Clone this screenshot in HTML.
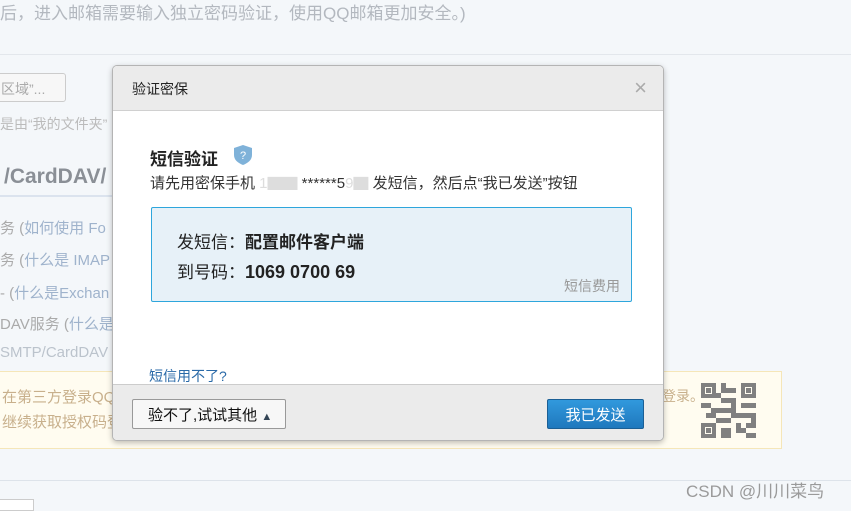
<!DOCTYPE html>
<html><head><meta charset="utf-8"><style>
*{margin:0;padding:0;box-sizing:border-box}
body{width:851px;height:507px;overflow:hidden;background:#f4f7fa;font-family:"Liberation Sans","Noto Sans CJK SC",sans-serif;position:relative;color:#999}
.a{position:absolute;white-space:nowrap}
.dlg{position:absolute;left:112px;top:65px;width:552px;height:376px;background:#fff;border:1px solid #b4b4b4;border-radius:5px;box-shadow:0 2px 6px rgba(0,0,0,.25);overflow:hidden}
.hd{height:45px;background:#ebebeb;border-bottom:1px solid #d0d0d0;font-size:14px;color:#222;padding:13px 0 0 19px}
.ft{position:absolute;left:0;right:0;bottom:0;height:56px;background:#ebebeb;border-top:1px solid #ccc}
</style></head><body>
<div class="a" style="left:0;top:-1px;font-size:17px;color:#b3b8bf">后，进入邮箱需要输入独立密码验证，使用QQ邮箱更加安全。)</div>
<div class="a" style="left:0;top:54px;width:851px;height:1px;background:#e3e7ec"></div>
<div class="a" style="left:-4px;top:73px;width:70px;height:29px;border:1px solid #ccc;border-radius:3px;background:#f7f7f7;font-size:14px;color:#aaa;padding:5px 0 0 4px">区域”...</div>
<div class="a" style="left:0;top:114px;font-size:14px;color:#bbb">是由“我的文件夹”</div>
<div class="a" style="left:4px;top:165px;font-size:21px;font-weight:bold;color:#8a8f96">/CardDAV/</div>
<div class="a" style="left:0;top:195px;width:112px;height:2px;background:#dbe3ee"></div>
<div class="a" style="left:0;top:217px;font-size:15px;color:#aaa">务 (<span style="color:#9fb3cc">如何使用 Fo</span></div>
<div class="a" style="left:0;top:249px;font-size:15px;color:#aaa">务 (<span style="color:#9fb3cc">什么是 IMAP</span></div>
<div class="a" style="left:0;top:282px;font-size:15px;color:#aaa">- (<span style="color:#9fb3cc">什么是Exchan</span></div>
<div class="a" style="left:0;top:313px;font-size:15px;color:#aaa">DAV服务 (<span style="color:#9fb3cc">什么是</span></div>
<div class="a" style="left:0;top:344px;font-size:15px;color:#bbc3cc">SMTP/CardDAV</div>
<div class="a" style="left:-2px;top:371px;width:784px;height:78px;background:#fffcf0;border:1px solid #f5e6b8"></div>
<div class="a" style="left:2px;top:386px;font-size:15px;color:#c8b08c">在第三方登录QQ</div>
<div class="a" style="left:2px;top:411px;font-size:15px;color:#c8b08c">继续获取授权码登</div>
<div class="a" style="left:662px;top:386px;font-size:14px;color:#c8b08c">登录。</div>
<svg class="a" style="left:701px;top:383px" width="55" height="55" viewBox="0 0 11 11"><g fill="#808080"><path d="M.4.4h2.2v2.2H.4zM8.4.4h2.2v2.2H8.4zM.4 8.4h2.2v2.2H.4z" fill="none" stroke="#808080" stroke-width=".8"/><rect x="1" y="1" width="1" height="1"/><rect x="9" y="1" width="1" height="1"/><rect x="1" y="9" width="1" height="1"/><rect x="4" y="0" width="1" height="2"/><rect x="5" y="1" width="2" height="1"/><rect x="4" y="3" width="3" height="1"/><rect x="0" y="4" width="2" height="1"/><rect x="3" y="5" width="2" height="1"/><rect x="6" y="4" width="1" height="3"/><rect x="8" y="4" width="3" height="1"/><rect x="1" y="6" width="2" height="1"/><rect x="8" y="6" width="2" height="1"/><rect x="4" y="7" width="2" height="1"/><rect x="7" y="8" width="1" height="2"/><rect x="9" y="8" width="2" height="1"/><rect x="4" y="9" width="2" height="2"/><rect x="9" y="10" width="2" height="1"/><rect x="8" y="9" width="1" height="1"/><rect x="3" y="2" width="1" height="1"/><rect x="7" y="6" width="1" height="1"/><rect x="2" y="5" width="1" height="1"/><rect x="10" y="6" width="1" height="2"/><rect x="5" y="5" width="1" height="1"/><rect x="3" y="7" width="1" height="1"/></g></svg>
<div class="a" style="left:0;top:480px;width:851px;height:1px;background:#dde3ea"></div>
<div class="a" style="left:-4px;top:499px;width:38px;height:12px;border:1px solid #ccc;background:#fff"></div>
<div class="a" style="left:686px;top:477px;font-size:17px;color:#9a9a9a">CSDN @川川菜鸟</div>

<div class="dlg">
 <div class="hd">验证密保<span style="position:absolute;right:16px;top:9px;font-size:22px;color:#aaa;font-weight:normal">×</span></div>
 <div class="a" style="left:37px;top:79px;font-size:17px;font-weight:bold;color:#222">短信验证</div>
 <svg class="a" style="left:120px;top:78px" width="20" height="22" viewBox="0 0 20 22"><path d="M10 1L19 4v7c0 5-4 8-9 10C5 19 1 16 1 11V4z" fill="#7fb2d9"/><text x="10" y="15" font-size="11" fill="#fff" text-anchor="middle" font-family="Liberation Sans">?</text></svg>
 <div class="a" style="left:37px;top:106px;font-size:15px;color:#333">请先用密保手机 <span style="color:#ddd">1▇▇</span> ******5<span style="color:#ddd">9▇</span> 发短信，然后点“我已发送”按钮</div>
 <div class="a" style="left:38px;top:141px;width:481px;height:95px;background:#e7f1f8;border:1px solid #2ea6dc;border-radius:2px"></div>
 <div class="a" style="left:64px;top:162px;font-size:17px;color:#222">发短信：<b>配置邮件客户端</b></div>
 <div class="a" style="left:64px;top:192px;font-size:17px;color:#222">到号码：<b style="font-size:18px">1069 0700 69</b></div>
 <div class="a" style="left:451px;top:210px;font-size:14px;color:#999">短信费用</div>
 <div class="a" style="left:36px;top:300px;font-size:14px;color:#2a6aa8">短信用不了?</div>
 <div class="ft">
  <div class="a" style="left:19px;top:14px;width:154px;height:30px;border:1px solid #999;border-radius:2px;background:#f7f7f7;font-size:15px;color:#111;padding:4px 0 0 15px">验不了,试试其他 <span style="font-size:11px;color:#345">▲</span></div>
  <div class="a" style="left:434px;top:14px;width:97px;height:30px;border:1px solid #1b5f95;border-radius:2px;background:linear-gradient(#3199dd,#1f78bd);font-size:15px;color:#fff;text-align:center;padding-top:4px">我已发送</div>
 </div>
</div>
</body></html>
